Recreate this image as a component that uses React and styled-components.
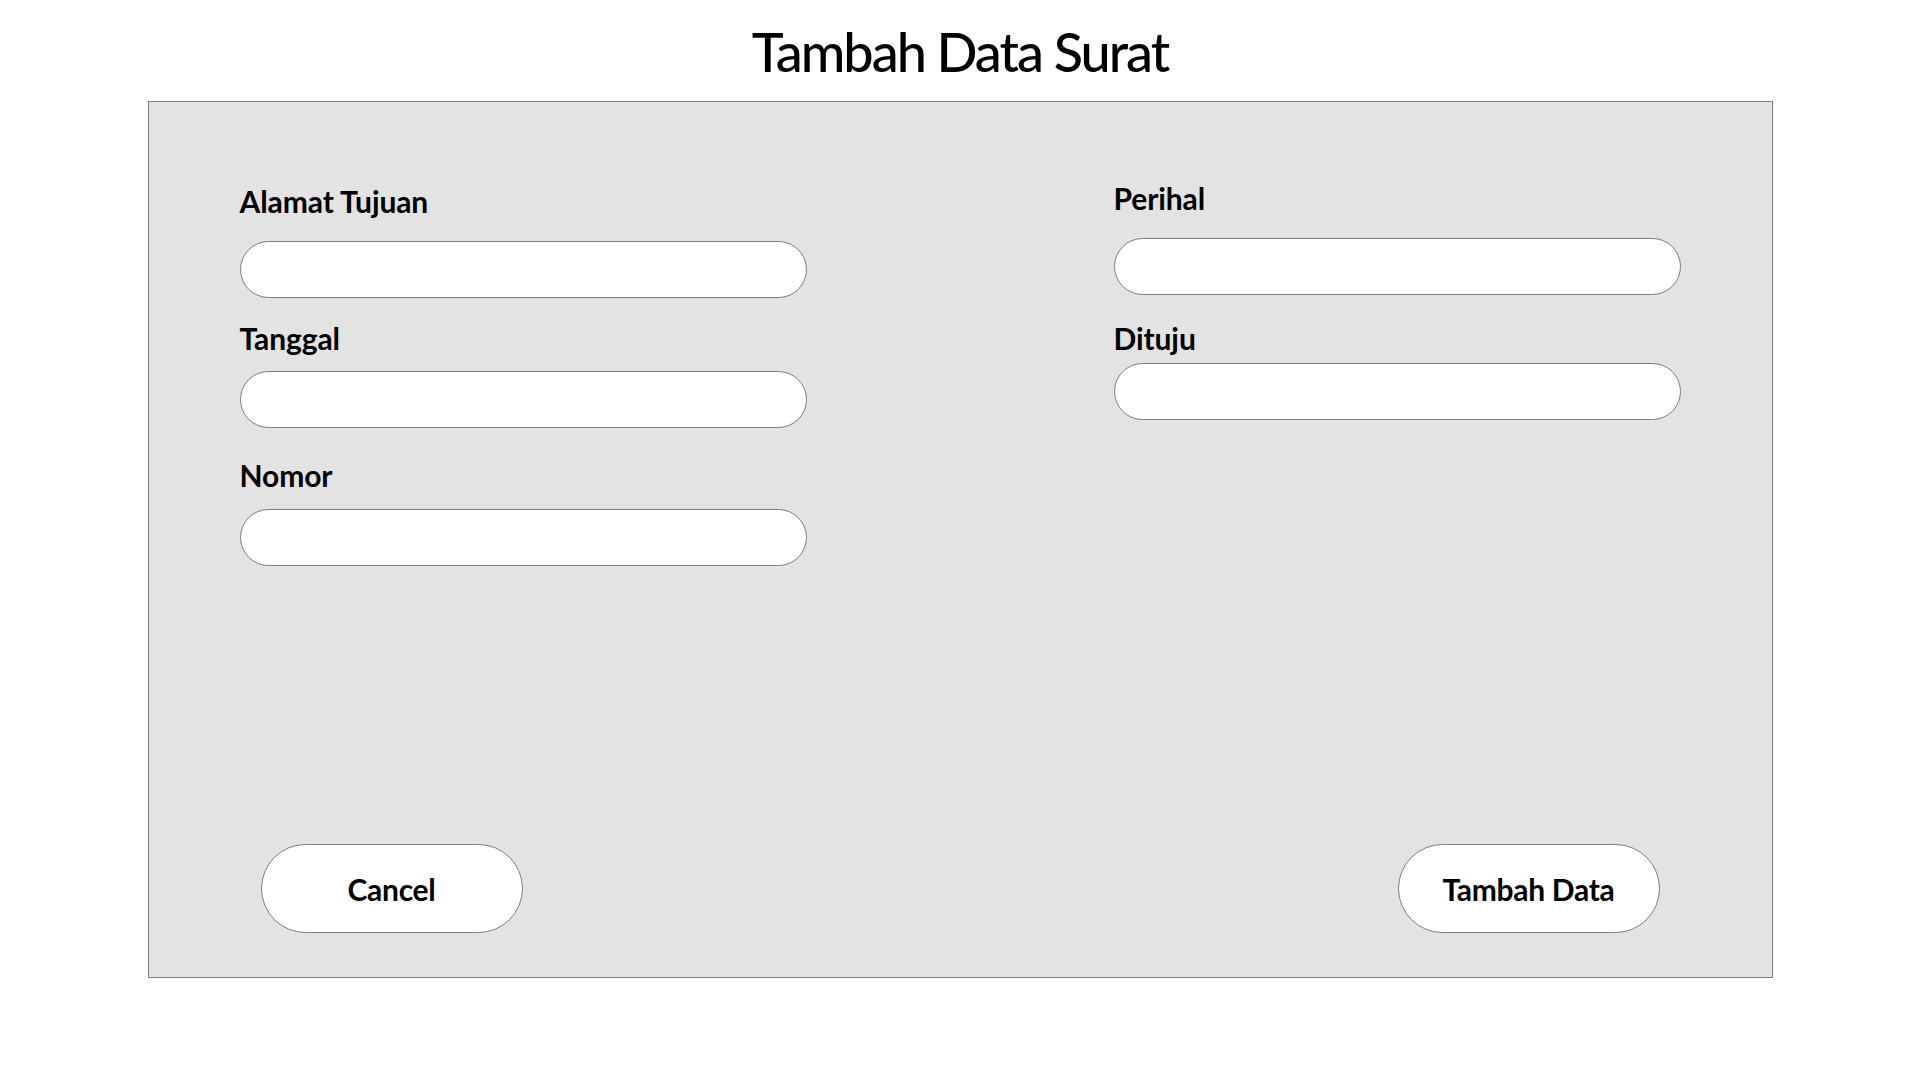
import styled, { createGlobalStyle } from "styled-components";

const GlobalStyle = createGlobalStyle`
  html, body {
    margin: 0;
    padding: 0;
    background: #fff;
  }
  * {
    box-sizing: border-box;
  }
`;

const fieldsLeft = [
  { label: "Alamat Tujuan", top: 82, gap: 23 },
  { label: "Tanggal", top: 23, gap: 16 },
  { label: "Nomor", top: 30, gap: 17 },
];

const fieldsRight = [
  { label: "Perihal", top: 79, gap: 23 },
  { label: "Dituju", top: 26, gap: 8 },
];

const Field = ({ label, top, gap }) => (
  <FieldWrap $top={top}>
    <Label>{label}</Label>
    <Input $gap={gap} />
  </FieldWrap>
);

const App = () => {
  return (
    <Wrapper>
      <GlobalStyle />
      <Title>Tambah Data Surat</Title>
      <Box>
        <Columns>
          <Column>
            {fieldsLeft.map((f) => (
              <Field key={f.label} {...f} />
            ))}
          </Column>
          <Column>
            {fieldsRight.map((f) => (
              <Field key={f.label} {...f} />
            ))}
          </Column>
        </Columns>
        <BtnRow>
          <Button>Cancel</Button>
          <Button>Tambah Data</Button>
        </BtnRow>
      </Box>
    </Wrapper>
  );
};

export default App;

export const Wrapper = styled.div`
  width: 100%;
  min-height: 1080px;
  display: flex;
  flex-direction: column;
  align-items: center;
  font-family: Lato, "Open Sans", sans-serif;
  color: #000;
`;

export const Title = styled.h1`
  margin: 0;
  padding-top: 19px;
  margin-bottom: 17px;
  font-size: 54px;
  font-weight: 500;
  line-height: 65px;
  letter-spacing: -2px;
  text-align: center;
`;

export const Box = styled.div`
  width: 1625px;
  height: 877px;
  border: 1px solid #7d7d7d;
  background: #e3e3e3;
  display: flex;
  flex-direction: column;
`;

export const Columns = styled.div`
  display: flex;
  justify-content: space-between;
  padding: 0 91px;
`;

export const Column = styled.div`
  width: 567px;
  display: flex;
  flex-direction: column;
`;

export const FieldWrap = styled.div`
  display: flex;
  flex-direction: column;
  margin-top: ${(p) => p.$top}px;
`;

export const Label = styled.label`
  font-size: 30px;
  font-weight: 700;
  line-height: 34px;
  letter-spacing: -0.1px;
`;

export const Input = styled.input`
  width: 567px;
  height: 57px;
  margin-top: ${(p) => p.$gap}px;
  border: 1px solid #7d7d7d;
  border-radius: 29px;
  background: #fff;
  padding: 0 24px;
  font-family: Lato, sans-serif;
  font-size: 22px;
  outline: none;
`;

export const BtnRow = styled.div`
  margin-top: auto;
  display: flex;
  justify-content: space-between;
  padding: 0 112px 44px;
`;

export const Button = styled.button`
  width: 262px;
  height: 89px;
  border: 1px solid #7d7d7d;
  border-radius: 45px;
  background: #fff;
  font-family: Lato, sans-serif;
  font-size: 30px;
  font-weight: 700;
  letter-spacing: -0.3px;
  color: #000;
  cursor: pointer;
`;
